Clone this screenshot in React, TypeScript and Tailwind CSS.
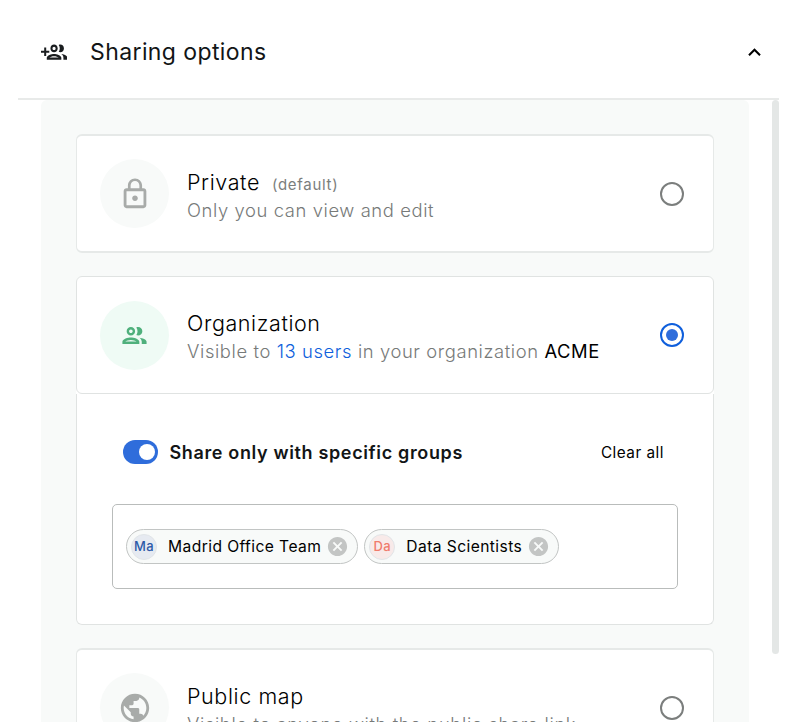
import type { ReactNode } from "react";
import { MdCancel, MdKeyboardArrowUp, MdLockOutline, MdOutlineGroup, MdPublic } from "react-icons/md";

function GroupAddIcon() {
  return (
    <svg viewBox="0 0 26 26" className="h-[26px] w-[26px] shrink-0 fill-[#1a1d1f]">
      <path d="M3.2 8.6h2v3.2h3.1v2H5.2v3.1h-2v-3.1H0v-2h3.2z" />
      <path
        transform="translate(3.7 0.2) scale(1.04 1.08)"
        d="M9 13.75c-2.34 0-7 1.17-7 3.5V19h14v-1.75c0-2.33-4.66-3.5-7-3.5zM4.34 17c.84-.58 2.87-1.25 4.66-1.25s3.82.67 4.66 1.25H4.34zM9 12c1.93 0 3.5-1.57 3.5-3.5S10.93 5 9 5 5.5 6.57 5.5 8.5 7.07 12 9 12zm0-5c.83 0 1.5.67 1.5 1.5S9.83 10 9 10s-1.5-.67-1.5-1.5S8.17 7 9 7zm7.04 6.81c1.16.84 1.96 1.96 1.96 3.44V19h4v-1.75c0-2.02-3.5-3.17-5.96-3.44zM15 12c1.93 0 3.5-1.57 3.5-3.5S16.93 5 15 5c-.54 0-1.04.13-1.5.35.63.89 1 1.98 1 3.15s-.37 2.26-1 3.15c.46.22.96.35 1.5.35z"
      />
    </svg>
  );
}

function Radio({ checked = false }: { checked?: boolean }) {
  return (
    <span
      className={
        "flex size-6 shrink-0 items-center justify-center rounded-full border-2 " +
        (checked ? "border-[#0f5fdc]" : "border-[#7b7e7d]")
      }
    >
      {checked && <span className="size-3 rounded-full bg-[#2f6ddb]" />}
    </span>
  );
}

type OptionProps = {
  icon: ReactNode;
  tint: string;
  title: string;
  note?: string;
  checked?: boolean;
  children: ReactNode;
};

function Option({ icon, tint, title, note, checked, children }: OptionProps) {
  return (
    <div
      className={
        "flex shrink-0 items-center rounded-md border-x bg-white pr-[29px] pl-[23px] " +
        (checked ? "h-[118px] border-y border-[#e0e3e2]" : "h-[119px] border-y-2 border-[#e6e9e8]")
      }
    >
      <span className={"flex size-[69px] shrink-0 items-center justify-center rounded-full " + tint}>{icon}</span>
      <div className="ml-[18px] flex-1 pt-[4px] whitespace-nowrap">
        <div className="flex h-7 items-baseline text-[21.5px] leading-7 font-[350] tracking-[0.6px] text-black">
          <span>{title}</span>
          {note && <span className="ml-3 text-[15px] font-normal tracking-[0.7px] text-[#7b7e7d]">{note}</span>}
        </div>
        <div className="h-7 text-[18.4px] leading-7 font-[350] tracking-[0.6px] text-[#777a79]">{children}</div>
      </div>
      <Radio checked={checked} />
    </div>
  );
}

function Chip({ initials, tint, label }: { initials: string; tint: string; label: string }) {
  return (
    <span className="flex h-[35px] items-center rounded-full border-[1.5px] border-[#c2c5c4] bg-[#f8faf9] pr-2 pl-1 whitespace-nowrap">
      <span
        className={
          "flex size-[26px] items-center justify-center rounded-full border border-[#e1e5e8] text-[13px] font-medium tracking-[0.4px] " +
          tint
        }
      >
        {initials}
      </span>
      <span className="ml-[11px] text-[15.6px] tracking-[0.42px] text-black">{label}</span>
      <MdCancel className="ml-[5px] size-[23px] text-[#c3c5c4]" />
    </span>
  );
}

export default function App() {
  return (
    <div className="flex h-[722px] w-[800px] flex-col overflow-hidden bg-white pl-[18px] font-['Inter','Liberation_Sans',sans-serif]">
      <header className="flex h-[100px] w-[761px] shrink-0 items-center border-b-2 border-[#e8eae9] pt-[6px] pr-3 pl-[23px]">
        <GroupAddIcon />
        <h1 className="ml-[23px] flex-1 pt-px text-[23px] tracking-[0.4px] text-[#121516]">Sharing options</h1>
        <MdKeyboardArrowUp className="size-[25px] text-black" />
      </header>
      <div className="flex min-h-0 w-[761px] flex-1 justify-between pl-[23px]">
        <main className="flex w-[708px] flex-col overflow-hidden rounded-t-md bg-[#f8faf9] px-[35px] pt-[34px]">
          <Option
            icon={<MdLockOutline className="size-[34px] text-[#a8aba9]" />}
            tint="bg-[#f8faf9]"
            title="Private"
            note="(default)"
          >
            Only you can view and edit
          </Option>
          <section className="my-[23px] flex h-[349px] shrink-0 flex-col rounded-md bg-white">
            <Option
              icon={<MdOutlineGroup className="size-[29px] text-[#4fb07c]" />}
              tint="bg-[#effbf5]"
              title="Organization"
              checked
            >
              Visible to <span className="text-[#0f5fdc]">13 users</span> in your organization{" "}
              <span className="font-normal text-black">ACME</span>
            </Option>
            <div className="flex-1 rounded-b-md border-x border-b border-[#e0e3e2] px-[35px] pt-[46px]">
              <div className="flex h-6 items-center pr-[14px] pl-[11px]">
                <span className="flex h-6 w-[35px] items-center justify-end rounded-full bg-[#2f6ddb] pr-[3.5px]">
                  <span className="size-4 rounded-full bg-white" />
                </span>
                <span className="ml-[11.5px] flex-1 text-[18px] font-[570] tracking-[0.64px] text-[#121516]">
                  Share only with specific groups
                </span>
                <span className="pt-[2px] text-[15.3px] tracking-[0.5px] text-black">Clear all</span>
              </div>
              <div className="mt-10 flex h-[85px] items-center gap-1.5 rounded-[5px] border border-[#b9bcbb] px-[13px]">
                <Chip initials="Ma" tint="bg-[#e6eaf1] text-[#2c5aa8]" label="Madrid Office Team" />
                <Chip initials="Da" tint="bg-[#f8eae9] text-[#f07b6c]" label="Data Scientists" />
              </div>
            </div>
          </section>
          <Option
            icon={<MdPublic className="size-[34px] text-[#a8aba9]" />}
            tint="bg-[#f8faf9]"
            title="Public map"
          >
            Visible to anyone with the public share link
          </Option>
        </main>
        <div className="h-[554px] w-[7px] rounded-full bg-[#e4e7e6]" />
      </div>
    </div>
  );
}
